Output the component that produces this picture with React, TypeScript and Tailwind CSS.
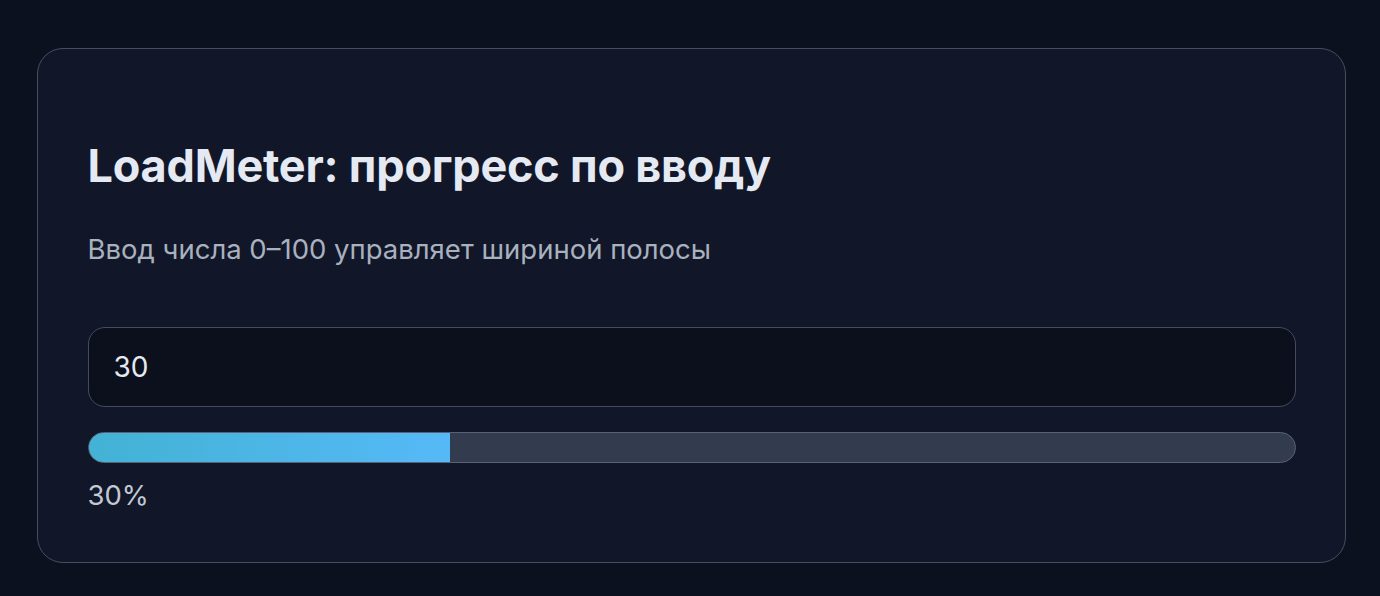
import { useState } from "react";

export default function App() {
  const [value, setValue] = useState("30");
  const n = Math.max(0, Math.min(100, Number(value) || 0));

  return (
    <div
      className="min-h-screen w-full bg-[#0b111f] pl-[37px] pr-[34px] pt-[48px] pb-[34px]"
      style={{ fontFamily: "Inter, 'Noto Sans', sans-serif" }}
    >
      <div className="rounded-[26px] border-[1.5px] border-[#454e61] bg-[#111729] px-[49.5px] pt-[89.5px] pb-[46px]">
        <h1 className="text-[45px] leading-[54px] font-bold tracking-[-0.2px] text-[#e5e9f2]">
          LoadMeter: прогресс по вводу
        </h1>
        <p className="mt-[36px] text-[27.5px] leading-[41px] text-[#a9b1bf]">
          Ввод числа 0–100 управляет шириной полосы
        </p>

        <input
          type="number"
          value={value}
          onChange={(e) => setValue(e.target.value)}
          className="mt-[57px] block h-[80px] w-full rounded-[17px] border-[1.5px] border-[#434c5f] bg-[#0b101c] px-[25px] text-[28px] text-[#e5e9f2] outline-none [appearance:textfield] [&::-webkit-inner-spin-button]:appearance-none"
        />

        <div className="mt-[25px] h-[31px] w-full overflow-hidden rounded-full border-[1.5px] border-[#586276] bg-[#333c4f]">
          <div
            className="h-full bg-gradient-to-r from-[#43b2d4] to-[#55b9f7]"
            style={{ width: `${n}%` }}
          />
        </div>

        <div className="mt-[12px] text-[27.5px] leading-[41px] text-[#c3c9d3]">{n}%</div>
      </div>
    </div>
  );
}
